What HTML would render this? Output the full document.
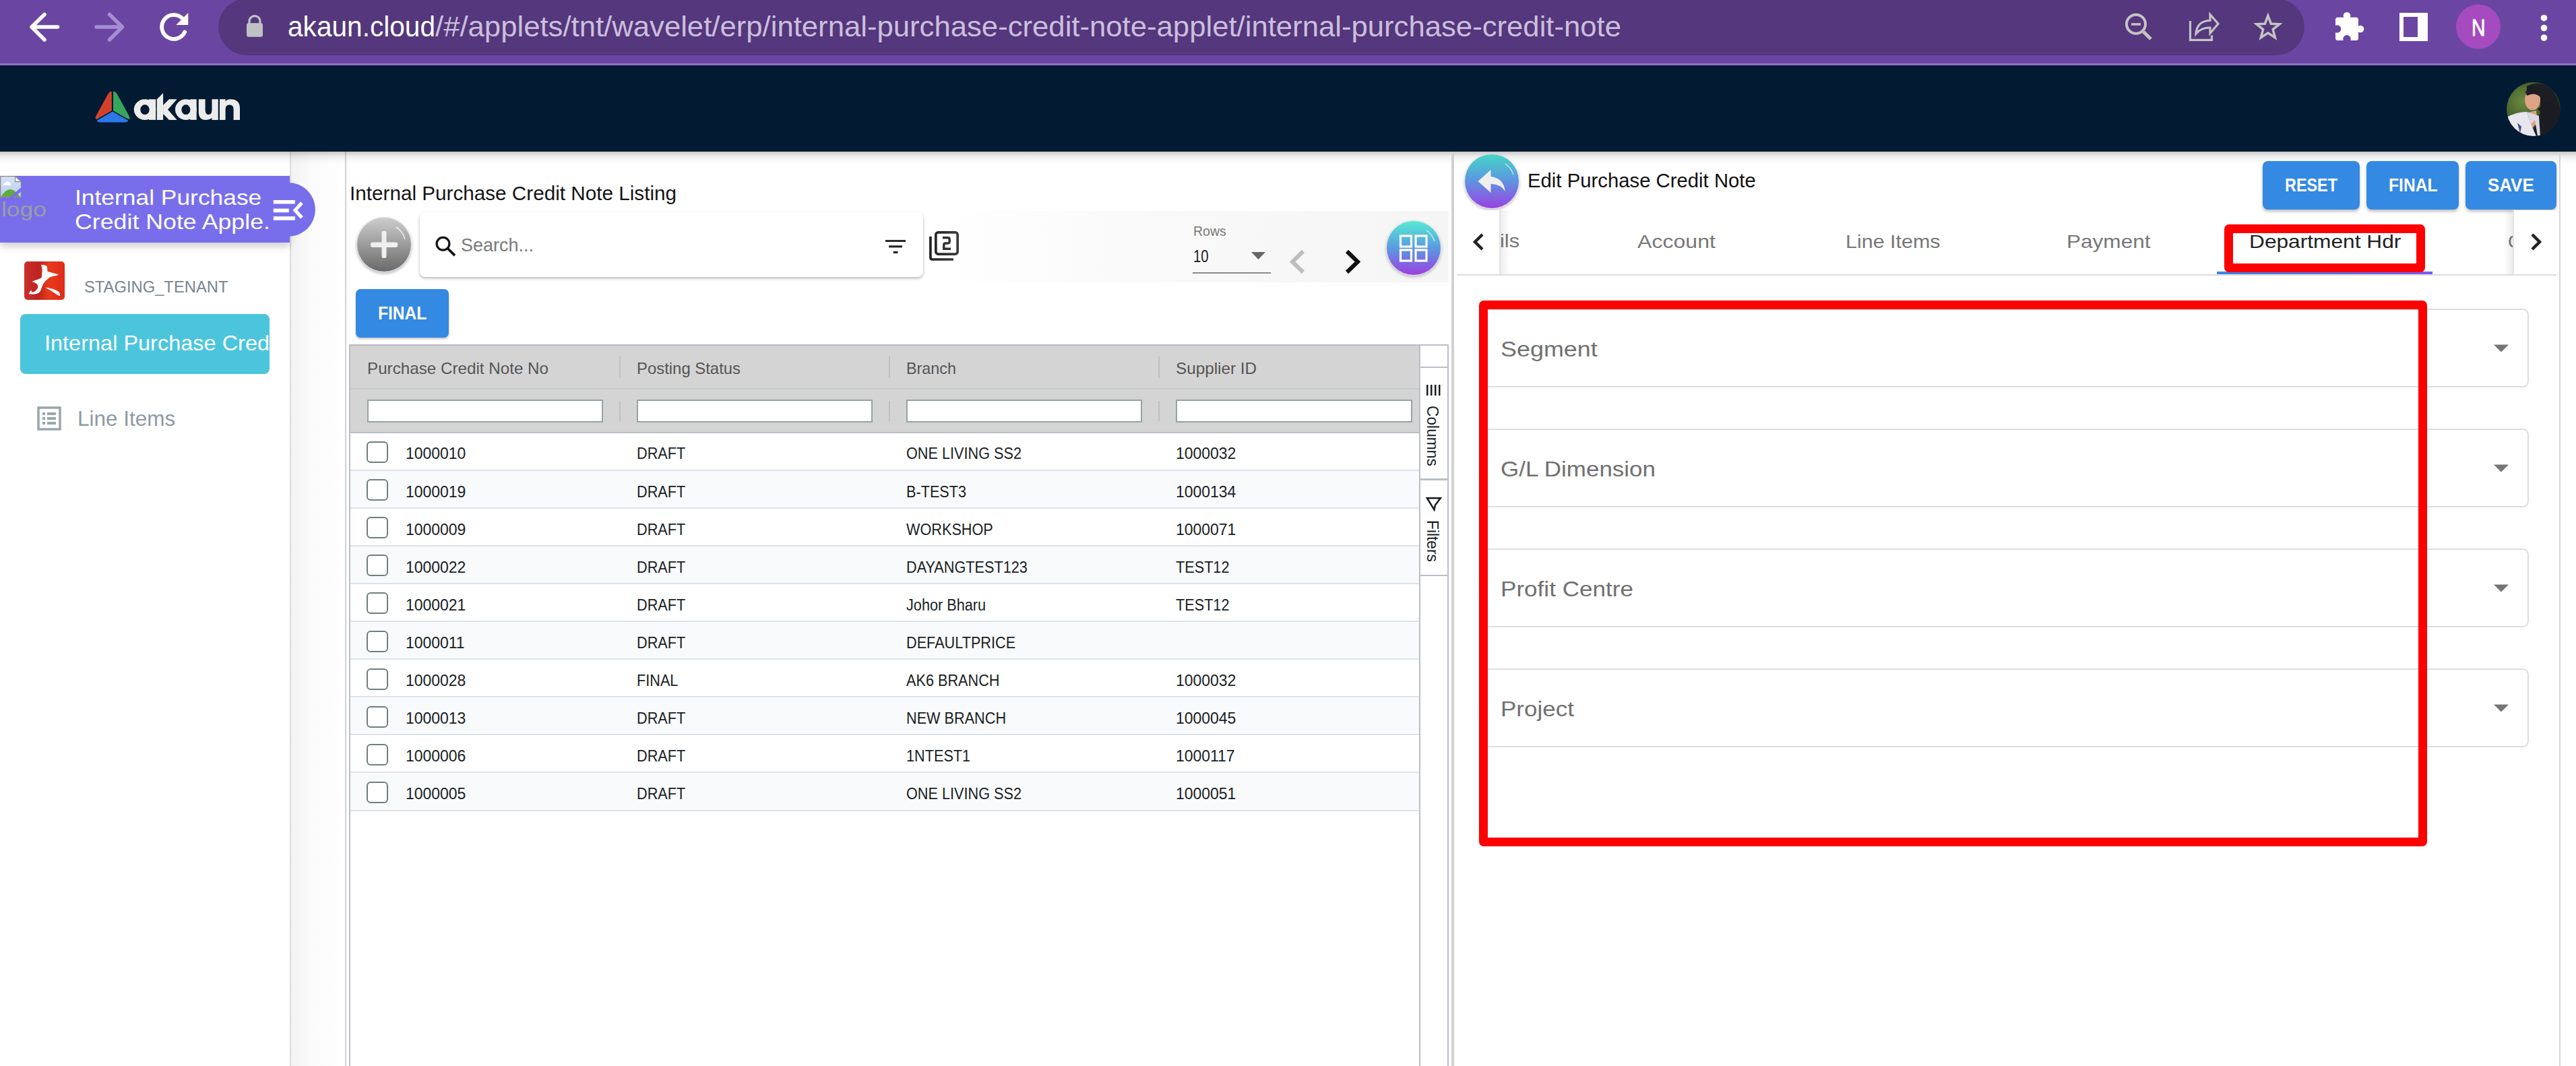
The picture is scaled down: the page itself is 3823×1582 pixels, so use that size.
<!DOCTYPE html>
<html><head><meta charset="utf-8"><style>
html,body{margin:0;padding:0;width:3823px;height:1582px;overflow:hidden;background:#fff;position:relative;font-family:"Liberation Sans", sans-serif;}
.a{position:absolute;box-sizing:border-box;}
.t{position:absolute;line-height:1;white-space:pre;}
.clip{position:absolute;overflow:hidden;}
svg{position:absolute;overflow:visible;}
</style></head><body>
<div class='a' style='left:0;top:0;width:3823px;height:94px;background:#6a46a2'></div>
<div class='a' style='left:0;top:94px;width:3823px;height:3px;background:#8d72c2'></div>
<div class='a' style='left:324px;top:-2px;width:3096px;height:84px;border-radius:42px;background:#54377c'></div>
<svg style='left:0;top:0' width='300' height='94'>
<g fill='none' stroke='#fff' stroke-width='5.5' stroke-linecap='round' stroke-linejoin='round'>
<path d='M85.5 40 H47.5 M66 21.5 L47 40 L66 59'/>
</g>
<g fill='none' stroke='#a58ed0' stroke-width='5.5' stroke-linecap='round' stroke-linejoin='round'>
<path d='M143 40 H181 M162.5 21.5 L181.5 40 L162.5 59'/>
</g>
<path d='M270.7 27.3 A17.9 17.9 0 1 0 274.2 47.6' fill='none' stroke='#fff' stroke-width='5.8' stroke-linecap='round'/>
<path d='M279.3 19.1 V37 H261.3 Z' fill='#fff'/>
</svg>
<svg style='left:0;top:0' width='420' height='94'>
<path d='M370 36 V31.6 A8 8 0 0 1 386 31.6 V36' fill='none' stroke='#bfc1c6' stroke-width='3.2'/>
<rect x='366' y='34.3' width='24' height='20.4' rx='3' fill='#bfc1c6'/>
</svg>
<div class='t' style='left:427.0px;top:18.3px;font-size:43.3px;color:#ffffff;font-weight:400;transform:scaleX(0.9378);transform-origin:0 0;'>akaun.cloud</div>
<div class='t' style='left:646.0px;top:18.3px;font-size:43.3px;color:#cbbfdd;font-weight:400;transform:scaleX(1.0087);transform-origin:0 0;'>/#/applets/tnt/wavelet/erp/internal-purchase-credit-note-applet/internal-purchase-credit-note</div>
<svg style='left:3140px;top:10px' width='300' height='70'>
<g fill='none' stroke='#c4c4c4'>
<circle cx='30' cy='25.8' r='14' stroke-width='4'/>
<path d='M23 26 H37' stroke-width='3.5'/>
<path d='M41 37 L52 48' stroke-width='5.2'/>
<path d='M110.5 21 V49.3 H142.5 V42.4' stroke-width='3.2'/>
<path d='M119 40 C120 28 127 20.5 140 20.5 V11.5 L152 25.3 L140 39.5 V31 C131 31 124 34 119 40 Z' stroke-width='3.2' stroke-linejoin='miter'/>
<path d='M225.9 13.3 L230.4 25.2 L243.0 25.7 L233.1 33.6 L236.5 45.9 L225.9 38.9 L215.3 45.9 L218.7 33.6 L208.8 25.7 L221.4 25.2 Z' stroke-width='3.5' stroke-linejoin='miter' stroke-miterlimit='10'/>
</g>
</svg>
<svg style='left:3440px;top:0' width='383' height='94'>
<g fill='#fff'>
<rect x='26' y='25.7' width='34' height='34.4' rx='3.5'/>
<circle cx='43' cy='23.2' r='5.3'/>
<circle cx='63' cy='43' r='5.3'/>
</g>
<g fill='#6a46a2'>
<circle cx='28.5' cy='43' r='5.8'/>
<circle cx='43' cy='57.8' r='5.8'/>
</g>
<rect x='121' y='19' width='42' height='42' fill='#fff'/>
<rect x='127' y='25' width='21' height='30' fill='#6a46a2'/>
<circle cx='238' cy='39.5' r='33' fill='#a54bbf'/>
<circle cx='335.5' cy='26.7' r='4.8' fill='#fff'/>
<circle cx='335.5' cy='41.5' r='4.8' fill='#fff'/>
<circle cx='335.5' cy='56' r='4.8' fill='#fff'/>
</svg>
<div class='t' style='left:3667.5px;top:23.2px;font-size:35.2px;color:#ffffff;font-weight:400;transform:scaleX(0.8064);transform-origin:0 0;-webkit-text-stroke:0.9px #fff;'>N</div>
<div class='a' style='left:0;top:97px;width:3823px;height:128px;background:#031a33'></div>
<svg style='left:0;top:0' width='400' height='225'>
<path d='M165.8 136 Q163 135 160 140 L143 171 Q140 177 143.5 177 L165.8 164.3 Z' fill='#d2412a'/>
<path d='M168 136 Q171 135 174 140 L191 171 Q194 177 190.5 177 L168 164.3 Z' fill='#37a55c'/>
<path d='M143.5 179 L166.9 165.5 L190.5 179 Q189 181.5 186 181.5 H148 Q145 181.5 143.5 179 Z' fill='#2a78ea'/>
<g fill='#ececec'>
<ellipse cx='215' cy='162.6' rx='16.2' ry='15.3'/>
<rect x='221' y='147.3' width='10.2' height='30.6'/>
<path d='M232.8 147.5 L242.1 138 V177.9 H232.8 Z'/>
<path d='M242.1 156 L251 147.3 H262.7 L249 162.6 L262.7 177.9 H251 L242.1 169 Z'/>
<ellipse cx='275.9' cy='162.6' rx='15.9' ry='15.3'/>
<rect x='282.3' y='147.3' width='9.4' height='30.6'/>
<path d='M294.8 147.3 H304.6 V163 Q304.6 170.1 309.5 170.1 Q314.5 170.1 314.5 163 V147.3 H323.8 V177.9 H314.5 V175 Q311 177.9 305 177.9 Q294.8 177.9 294.8 166 Z'/>
<path d='M326 177.9 H334.6 V162 Q334.6 155.4 340.6 155.4 Q346.6 155.4 346.6 162 V177.9 H356 V161 Q356 147.3 342 147.3 Q337 147.3 334.6 150.5 V147.3 H326 Z'/>
</g>
<g fill='#031a33'>
<ellipse cx='215' cy='162.7' rx='6.7' ry='7.4'/>
<ellipse cx='275.9' cy='162.7' rx='6.5' ry='7.4'/>
</g>
</svg>
<svg style='left:3720px;top:122px' width='80' height='80'>
<defs><clipPath id='avc'><circle cx='40' cy='40' r='40'/></clipPath>
<radialGradient id='avg' cx='0.3' cy='0.35' r='0.7'><stop offset='0' stop-color='#6b8a3e'/><stop offset='0.6' stop-color='#3f5a2a'/><stop offset='1' stop-color='#2a3d20'/></radialGradient></defs>
<g clip-path='url(#avc)'>
<rect width='80' height='80' fill='url(#avg)'/>
<path d='M30 6 Q45 -2 62 6 Q78 20 80 45 L80 80 L36 80 Q44 60 50 45 Q52 30 46 18 Q38 14 30 20 Z' fill='#1d1d24'/>
<ellipse cx='38.5' cy='26' rx='11.5' ry='15.5' fill='#dca384'/>
<path d='M28 14 Q36 6 48 10 Q52 16 50 22 Q42 14 30 20 Z' fill='#1d1d24'/>
<path d='M32 45 L44 42 L46 60 L36 70 Z' fill='#d9a385'/>
<path d='M0 52 Q15 44 30 44 L36 62 L44 80 L0 80 Z' fill='#e9e6ef'/>
<path d='M30 44 L36 62 L42 56 L46 80 L50 80 L48 50 Z' fill='#dcd8e6'/>
<path d='M46 40 Q60 50 56 80 L80 80 L80 40 Q70 30 60 28 Z' fill='#1b1b22'/>
<path d='M16 60 L22 66 L20 76 Z' fill='#3c4f8a'/>
</g>
</svg>
<div class='a' style='left:430px;top:225px;width:2px;height:1357px;background:#dcdcdc'></div>
<div class='a' style='left:432px;top:225px;width:81px;height:1357px;background:linear-gradient(to right,#f3f3f3,#fbfbfb 40%,#ffffff)'></div>
<div class='a' style='left:512px;top:225px;width:2px;height:1357px;background:#d2d2d2'></div>
<div class='a' style='left:0;top:225px;width:3823px;height:20px;background:linear-gradient(rgba(0,0,0,0.22),rgba(0,0,0,0.07) 35%,rgba(0,0,0,0.02) 70%,rgba(0,0,0,0))'></div>
<div class='a' style='left:0;top:261px;width:430px;height:99px;background:#786eec;box-shadow:0 6px 10px rgba(0,0,0,0.18)'></div>
<div class='a' style='left:388px;top:271px;width:80px;height:80px;border-radius:50%;background:#786eec'></div>
<svg style='left:0;top:261px' width='34' height='34'>
<defs><linearGradient id='big' x1='0' y1='0' x2='0' y2='1'><stop offset='0' stop-color='#d6e2f7'/><stop offset='1' stop-color='#bccfee'/></linearGradient></defs>
<path d='M0 0.6 H22.6 L31.4 8.6 V31.4 H0 Z' fill='url(#big)'/>
<path d='M1 31.4 Q8 20 15.4 20 Q22 20 30 31.4 Z' fill='#62ab3a'/>
<path d='M4 13.8 Q5 10.5 8.5 10 Q10 7.5 13 8.5 Q15.5 9.5 15.5 12 Q16.5 13 15.5 14 H4 Z' fill='#fff'/>
<path d='M22.6 0.6 V8.6 H31.4 Z' fill='#fff'/>
<path d='M13.9 32.5 L33 15.5 V22 L20.5 32.5 Z' fill='#786eec'/>
<g fill='none' stroke='#8c8c8c' stroke-width='1.3'>
<path d='M13.9 31.4 H0.6 V0.6 H22.6 L31.4 8.6 V15.8'/>
<path d='M22.6 0.6 V8.6 H31.4'/>
<path d='M31.4 22.5 V31.4 H20.5'/>
</g>
</svg>
<div class='t' style='left:2.2px;top:296.4px;font-size:30px;color:#999ea3;font-weight:400;transform:scaleX(1.1813);transform-origin:0 0;'>logo</div>
<div class='t' style='left:111.2px;top:276.9px;font-size:32px;color:#ffffff;font-weight:400;transform:scaleX(1.1056);transform-origin:0 0;'>Internal Purchase</div>
<div class='clip' style='left:111px;top:305px;width:289px;height:45px'>
<div class='t' style='left:0.2px;top:7.7px;font-size:32px;color:#ffffff;font-weight:400;transform:scaleX(1.1165);transform-origin:0 0;'>Credit Note Apple...</div>
</div>
<svg style='left:400px;top:290px' width='60' height='45'>
<g fill='#fff'><rect x='5.8' y='7' width='32' height='5.5'/><rect x='5.8' y='19.6' width='23' height='5.6'/><rect x='5.8' y='31.2' width='32' height='5.6'/></g>
<path d='M48 11 L38 22 L48 33' fill='none' stroke='#fff' stroke-width='5'/>
</svg>
<div class='a' style='left:36px;top:388px;width:60px;height:57px;border-radius:5px;background:linear-gradient(to right,#c9322b,#bf2220 35%,#e63b1c 60%,#e12a17)'></div>
<svg style='left:36px;top:388px' width='60' height='57'>
<path fill='#fff' d='M25 5.2 Q30 4.5 33.8 7.3 Q34 11 34.7 15 L50.7 19.2 Q50 20.5 48 21 Q42 22 38 23.4 Q34 26 31.3 29.3 Q28.5 32.5 27 36 Q25.5 40 24.5 42.8 Q23 46 21.2 47 Q17 48.7 12.7 48.7 L6.8 48.3 Q7.5 46 8.5 44.5 L10.6 42.4 Q10.8 44 11 45.8 Q14 45.5 16 44.5 Q18.5 42 19.9 39.4 Q20.5 37.5 20.3 36 Q19.5 34 17.8 32.7 Q14.5 31 11.4 30.1 Q14 28.8 17.8 27.6 L25.4 24.6 Q26.2 22 26.2 19.2 Q26.6 14 26.6 10.7 Q26 8 25 5.2 Z'/>
<path fill='#fff' d='M30.9 38.6 Q37 39.5 43.1 41.1 Q48 43 51.6 45.3 Q53 47.5 53.3 50.4 Q52 51 50.7 50.8 Q46 47.5 41.4 44.5 Q36 41.5 30.9 38.6 Z'/>
</svg>
<div class='t' style='left:124.6px;top:414.3px;font-size:24px;color:#77858f;font-weight:400;transform:scaleX(0.9899);transform-origin:0 0;'>STAGING_TENANT</div>
<div class='a' style='left:30px;top:466px;width:370px;height:89px;border-radius:8px;background:#4bc5dc'></div>
<div class='clip' style='left:66px;top:480px;width:334px;height:60px'>
<div class='t' style='left:0.0px;top:14.3px;font-size:31.5px;color:#ffffff;font-weight:400;transform:scaleX(1.0313);transform-origin:0 0;'>Internal Purchase Credit Note</div>
</div>
<svg style='left:54px;top:602px' width='40' height='40'>
<rect x='3' y='3' width='32' height='32' fill='none' stroke='#9aa6ae' stroke-width='3.5'/>
<g fill='#9aa6ae'><rect x='9' y='10' width='4' height='4'/><rect x='16' y='10' width='13' height='4'/>
<rect x='9' y='17' width='4' height='4'/><rect x='16' y='17' width='13' height='4'/>
<rect x='9' y='24' width='4' height='4'/><rect x='16' y='24' width='13' height='4'/></g>
</svg>
<div class='t' style='left:114.7px;top:604.9px;font-size:32px;color:#8e9aa2;font-weight:400;transform:scaleX(0.9843);transform-origin:0 0;'>Line Items</div>
<div class='t' style='left:518.6px;top:271.6px;font-size:30px;color:#141414;font-weight:400;transform:scaleX(0.9893);transform-origin:0 0;'>Internal Purchase Credit Note Listing</div>
<div class='a' style='left:529px;top:322px;width:82px;height:82px;border-radius:50%;background:linear-gradient(#cdcdcd,#6a6a6a);border:1.5px solid #e8def2;box-shadow:0 2px 4px rgba(0,0,0,0.3)'></div>
<svg style='left:529px;top:322px' width='82' height='82'>
<rect x='21' y='37.5' width='40.2' height='7.6' rx='3' fill='#efefef'/><rect x='37.5' y='20.8' width='7' height='40.2' rx='3' fill='#efefef'/>
<path d='M59 15 A31 31 0 0 1 72 33' fill='none' stroke='rgba(255,255,255,0.75)' stroke-width='1.5'/>
</svg>
<div class='a' style='left:623px;top:315px;width:747px;height:96px;border-radius:8px;background:#fff;box-shadow:0 2px 4px rgba(0,0,0,0.3)'></div>
<svg style='left:640px;top:345px' width='45' height='40'>
<circle cx='17.5' cy='16.8' r='9.4' fill='none' stroke='#111' stroke-width='3.2'/>
<path d='M24.2 23.5 L35 34.2' stroke='#111' stroke-width='3.8'/>
</svg>
<div class='t' style='left:683.7px;top:349.8px;font-size:28px;color:#7a7a7a;font-weight:400;transform:scaleX(0.9637);transform-origin:0 0;'>Search...</div>
<svg style='left:1310px;top:350px' width='40' height='30'>
<g fill='#222'><rect x='4' y='6.1' width='30' height='2.9'/><rect x='9.1' y='14.3' width='19.8' height='3.1'/><rect x='15.8' y='22.8' width='6.6' height='3.2'/></g>
</svg>
<svg style='left:1375px;top:340px' width='52' height='52'>
<path d='M5.9 11 V42 Q5.9 45 9 45 H40' fill='none' stroke='#222' stroke-width='3.7'/>
<rect x='13.85' y='4.85' width='32.3' height='32.2' rx='3.5' fill='none' stroke='#222' stroke-width='3.7'/>
<path d='M24 12.8 H31.5 Q34.2 12.8 34.2 15.5 V18.3 Q34.2 21 31.5 21 H28.5 Q25.8 21 25.8 23.7 V29.2 H36' fill='none' stroke='#222' stroke-width='3.5'/>
</svg>
<div class='a' style='left:1380px;top:313px;width:770px;height:106px;background:linear-gradient(to right,rgba(246,246,246,0),#f9f9f9 45%,#f5f5f5)'></div>
<div class='t' style='left:1770.7px;top:333.1px;font-size:20px;color:#777777;font-weight:400;transform:scaleX(0.9737);transform-origin:0 0;'>Rows</div>
<div class='t' style='left:1770.7px;top:367.0px;font-size:26px;color:#222222;font-weight:400;transform:scaleX(0.7849);transform-origin:0 0;'>10</div>
<div class='a' style='left:1770px;top:404px;width:116px;height:2px;background:#8a8a8a'></div>
<svg style='left:1855px;top:372px' width='26' height='16'><path d='M2 2 H23 L12.5 13 Z' fill='#666'/></svg>
<svg style='left:1905px;top:365px' width='130' height='48'>
<path d='M29 8 L13 23.5 L29 39' fill='none' stroke='#bdbdbd' stroke-width='6'/>
<path d='M94 8 L110 23.5 L94 39' fill='none' stroke='#111' stroke-width='6'/>
</svg>
<div class='a' style='left:2057px;top:327px;width:82px;height:82px;border-radius:50%;background:linear-gradient(#55ecd2,#5a9ae0 50%,#9d3fe2);border:1.5px solid #e8def2;box-shadow:0 2px 4px rgba(0,0,0,0.25)'></div>
<svg style='left:2057px;top:327px' width='82' height='82'>
<g fill='none' stroke='#fff' stroke-width='3.2'><rect x='21.5' y='23' width='16' height='16'/><rect x='44' y='23' width='16' height='16'/><rect x='21.5' y='44' width='16' height='16'/><rect x='44' y='44' width='16' height='16'/></g>
<path d='M60 15 A31 31 0 0 1 72 31' fill='none' stroke='rgba(255,255,255,0.7)' stroke-width='1.5'/>
</svg>
<div class='a' style='left:528px;top:429px;width:138px;height:72px;border-radius:7px;background:#3489e2;box-shadow:0 2px 3px rgba(0,0,0,0.25)'></div>
<div class='t' style='left:560.7px;top:450.9px;font-size:28px;color:#ffffff;font-weight:700;transform:scaleX(0.8770);transform-origin:0 0;'>FINAL</div>
<div class='a' style='left:518px;top:511px;width:1590px;height:1071px;border:2px solid #babfc7;border-bottom:none;background:#fff'></div>
<div class='a' style='left:520px;top:513px;width:1587px;height:129px;background:#d4d4d4'></div>
<div class='a' style='left:520px;top:576px;width:1587px;height:2px;background:#c6c9cc'></div>
<div class='a' style='left:520px;top:641px;width:1587px;height:2px;background:#babfc7'></div>
<div class='a' style='left:919px;top:529px;width:2px;height:32px;background:#c0c0c0'></div>
<div class='a' style='left:919px;top:595px;width:2px;height:30px;background:#c0c0c0'></div>
<div class='a' style='left:1319px;top:529px;width:2px;height:32px;background:#c0c0c0'></div>
<div class='a' style='left:1319px;top:595px;width:2px;height:30px;background:#c0c0c0'></div>
<div class='a' style='left:1719px;top:529px;width:2px;height:32px;background:#c0c0c0'></div>
<div class='a' style='left:1719px;top:595px;width:2px;height:30px;background:#c0c0c0'></div>
<div class='t' style='left:544.6px;top:534.7px;font-size:24px;color:#555555;font-weight:400;transform:scaleX(1.0083);transform-origin:0 0;'>Purchase Credit Note No</div>
<div class='t' style='left:944.5px;top:534.7px;font-size:24px;color:#555555;font-weight:400;transform:scaleX(0.9951);transform-origin:0 0;'>Posting Status</div>
<div class='t' style='left:1344.6px;top:534.7px;font-size:24px;color:#555555;font-weight:400;transform:scaleX(0.9731);transform-origin:0 0;'>Branch</div>
<div class='t' style='left:1744.7px;top:534.7px;font-size:24px;color:#555555;font-weight:400;transform:scaleX(1.0107);transform-origin:0 0;'>Supplier ID</div>
<div class='a' style='left:544.6px;top:592.7px;width:350.8px;height:34.6px;background:#fff;border:2px solid #95a3a4'></div>
<div class='a' style='left:944.5px;top:592.7px;width:350.5px;height:34.6px;background:#fff;border:2px solid #95a3a4'></div>
<div class='a' style='left:1344.6px;top:592.7px;width:350.9px;height:34.6px;background:#fff;border:2px solid #95a3a4'></div>
<div class='a' style='left:1744.7px;top:592.7px;width:350.9px;height:34.6px;background:#fff;border:2px solid #95a3a4'></div>
<div class='a' style='left:520px;top:643.0px;width:1587px;height:54.1px;background:#ffffff'></div>
<div class='a' style='left:520px;top:696.6px;width:1587px;height:2px;background:#dde2eb'></div>
<div class='a' style='left:544px;top:655.0px;width:32px;height:32px;border:2.5px solid #6f7e7e;border-radius:6px;background:#fff'></div>
<div class='t' style='left:601.8px;top:662.4px;font-size:23.3px;color:#181d1f;font-weight:400;transform:scaleX(0.985);transform-origin:0 0;'>1000010</div>
<div class='t' style='left:945.0px;top:662.4px;font-size:23.3px;color:#181d1f;font-weight:400;transform:scaleX(0.93);transform-origin:0 0;'>DRAFT</div>
<div class='t' style='left:1344.6px;top:662.4px;font-size:23.3px;color:#181d1f;font-weight:400;transform:scaleX(0.93);transform-origin:0 0;'>ONE LIVING SS2</div>
<div class='t' style='left:1745.0px;top:662.4px;font-size:23.3px;color:#181d1f;font-weight:400;transform:scaleX(0.985);transform-origin:0 0;'>1000032</div>
<div class='a' style='left:520px;top:699.1px;width:1587px;height:54.1px;background:#f9fafc'></div>
<div class='a' style='left:520px;top:752.7px;width:1587px;height:2px;background:#dde2eb'></div>
<div class='a' style='left:544px;top:711.1px;width:32px;height:32px;border:2.5px solid #6f7e7e;border-radius:6px;background:#fff'></div>
<div class='t' style='left:601.8px;top:718.5px;font-size:23.3px;color:#181d1f;font-weight:400;transform:scaleX(0.985);transform-origin:0 0;'>1000019</div>
<div class='t' style='left:945.0px;top:718.5px;font-size:23.3px;color:#181d1f;font-weight:400;transform:scaleX(0.93);transform-origin:0 0;'>DRAFT</div>
<div class='t' style='left:1344.6px;top:718.5px;font-size:23.3px;color:#181d1f;font-weight:400;transform:scaleX(0.93);transform-origin:0 0;'>B-TEST3</div>
<div class='t' style='left:1745.0px;top:718.5px;font-size:23.3px;color:#181d1f;font-weight:400;transform:scaleX(0.985);transform-origin:0 0;'>1000134</div>
<div class='a' style='left:520px;top:755.2px;width:1587px;height:54.1px;background:#ffffff'></div>
<div class='a' style='left:520px;top:808.8px;width:1587px;height:2px;background:#dde2eb'></div>
<div class='a' style='left:544px;top:767.2px;width:32px;height:32px;border:2.5px solid #6f7e7e;border-radius:6px;background:#fff'></div>
<div class='t' style='left:601.8px;top:774.6px;font-size:23.3px;color:#181d1f;font-weight:400;transform:scaleX(0.985);transform-origin:0 0;'>1000009</div>
<div class='t' style='left:945.0px;top:774.6px;font-size:23.3px;color:#181d1f;font-weight:400;transform:scaleX(0.93);transform-origin:0 0;'>DRAFT</div>
<div class='t' style='left:1344.6px;top:774.6px;font-size:23.3px;color:#181d1f;font-weight:400;transform:scaleX(0.93);transform-origin:0 0;'>WORKSHOP</div>
<div class='t' style='left:1745.0px;top:774.6px;font-size:23.3px;color:#181d1f;font-weight:400;transform:scaleX(0.985);transform-origin:0 0;'>1000071</div>
<div class='a' style='left:520px;top:811.3px;width:1587px;height:54.1px;background:#f9fafc'></div>
<div class='a' style='left:520px;top:864.9px;width:1587px;height:2px;background:#dde2eb'></div>
<div class='a' style='left:544px;top:823.3px;width:32px;height:32px;border:2.5px solid #6f7e7e;border-radius:6px;background:#fff'></div>
<div class='t' style='left:601.8px;top:830.7px;font-size:23.3px;color:#181d1f;font-weight:400;transform:scaleX(0.985);transform-origin:0 0;'>1000022</div>
<div class='t' style='left:945.0px;top:830.7px;font-size:23.3px;color:#181d1f;font-weight:400;transform:scaleX(0.93);transform-origin:0 0;'>DRAFT</div>
<div class='t' style='left:1344.6px;top:830.7px;font-size:23.3px;color:#181d1f;font-weight:400;transform:scaleX(0.93);transform-origin:0 0;'>DAYANGTEST123</div>
<div class='t' style='left:1745.0px;top:830.7px;font-size:23.3px;color:#181d1f;font-weight:400;transform:scaleX(0.93);transform-origin:0 0;'>TEST12</div>
<div class='a' style='left:520px;top:867.4px;width:1587px;height:54.1px;background:#ffffff'></div>
<div class='a' style='left:520px;top:921.0px;width:1587px;height:2px;background:#dde2eb'></div>
<div class='a' style='left:544px;top:879.4px;width:32px;height:32px;border:2.5px solid #6f7e7e;border-radius:6px;background:#fff'></div>
<div class='t' style='left:601.8px;top:886.8px;font-size:23.3px;color:#181d1f;font-weight:400;transform:scaleX(0.985);transform-origin:0 0;'>1000021</div>
<div class='t' style='left:945.0px;top:886.8px;font-size:23.3px;color:#181d1f;font-weight:400;transform:scaleX(0.93);transform-origin:0 0;'>DRAFT</div>
<div class='t' style='left:1344.6px;top:886.8px;font-size:23.3px;color:#181d1f;font-weight:400;transform:scaleX(0.93);transform-origin:0 0;'>Johor Bharu</div>
<div class='t' style='left:1745.0px;top:886.8px;font-size:23.3px;color:#181d1f;font-weight:400;transform:scaleX(0.93);transform-origin:0 0;'>TEST12</div>
<div class='a' style='left:520px;top:923.5px;width:1587px;height:54.1px;background:#f9fafc'></div>
<div class='a' style='left:520px;top:977.1px;width:1587px;height:2px;background:#dde2eb'></div>
<div class='a' style='left:544px;top:935.5px;width:32px;height:32px;border:2.5px solid #6f7e7e;border-radius:6px;background:#fff'></div>
<div class='t' style='left:601.8px;top:942.9px;font-size:23.3px;color:#181d1f;font-weight:400;transform:scaleX(0.985);transform-origin:0 0;'>1000011</div>
<div class='t' style='left:945.0px;top:942.9px;font-size:23.3px;color:#181d1f;font-weight:400;transform:scaleX(0.93);transform-origin:0 0;'>DRAFT</div>
<div class='t' style='left:1344.6px;top:942.9px;font-size:23.3px;color:#181d1f;font-weight:400;transform:scaleX(0.93);transform-origin:0 0;'>DEFAULTPRICE</div>
<div class='a' style='left:520px;top:979.6px;width:1587px;height:54.1px;background:#ffffff'></div>
<div class='a' style='left:520px;top:1033.2px;width:1587px;height:2px;background:#dde2eb'></div>
<div class='a' style='left:544px;top:991.6px;width:32px;height:32px;border:2.5px solid #6f7e7e;border-radius:6px;background:#fff'></div>
<div class='t' style='left:601.8px;top:999.0px;font-size:23.3px;color:#181d1f;font-weight:400;transform:scaleX(0.985);transform-origin:0 0;'>1000028</div>
<div class='t' style='left:945.0px;top:999.0px;font-size:23.3px;color:#181d1f;font-weight:400;transform:scaleX(0.93);transform-origin:0 0;'>FINAL</div>
<div class='t' style='left:1344.6px;top:999.0px;font-size:23.3px;color:#181d1f;font-weight:400;transform:scaleX(0.93);transform-origin:0 0;'>AK6 BRANCH</div>
<div class='t' style='left:1745.0px;top:999.0px;font-size:23.3px;color:#181d1f;font-weight:400;transform:scaleX(0.985);transform-origin:0 0;'>1000032</div>
<div class='a' style='left:520px;top:1035.7px;width:1587px;height:54.1px;background:#f9fafc'></div>
<div class='a' style='left:520px;top:1089.3px;width:1587px;height:2px;background:#dde2eb'></div>
<div class='a' style='left:544px;top:1047.7px;width:32px;height:32px;border:2.5px solid #6f7e7e;border-radius:6px;background:#fff'></div>
<div class='t' style='left:601.8px;top:1055.1px;font-size:23.3px;color:#181d1f;font-weight:400;transform:scaleX(0.985);transform-origin:0 0;'>1000013</div>
<div class='t' style='left:945.0px;top:1055.1px;font-size:23.3px;color:#181d1f;font-weight:400;transform:scaleX(0.93);transform-origin:0 0;'>DRAFT</div>
<div class='t' style='left:1344.6px;top:1055.1px;font-size:23.3px;color:#181d1f;font-weight:400;transform:scaleX(0.93);transform-origin:0 0;'>NEW BRANCH</div>
<div class='t' style='left:1745.0px;top:1055.1px;font-size:23.3px;color:#181d1f;font-weight:400;transform:scaleX(0.985);transform-origin:0 0;'>1000045</div>
<div class='a' style='left:520px;top:1091.8px;width:1587px;height:54.1px;background:#ffffff'></div>
<div class='a' style='left:520px;top:1145.4px;width:1587px;height:2px;background:#dde2eb'></div>
<div class='a' style='left:544px;top:1103.8px;width:32px;height:32px;border:2.5px solid #6f7e7e;border-radius:6px;background:#fff'></div>
<div class='t' style='left:601.8px;top:1111.2px;font-size:23.3px;color:#181d1f;font-weight:400;transform:scaleX(0.985);transform-origin:0 0;'>1000006</div>
<div class='t' style='left:945.0px;top:1111.2px;font-size:23.3px;color:#181d1f;font-weight:400;transform:scaleX(0.93);transform-origin:0 0;'>DRAFT</div>
<div class='t' style='left:1344.6px;top:1111.2px;font-size:23.3px;color:#181d1f;font-weight:400;transform:scaleX(0.93);transform-origin:0 0;'>1NTEST1</div>
<div class='t' style='left:1745.0px;top:1111.2px;font-size:23.3px;color:#181d1f;font-weight:400;transform:scaleX(0.985);transform-origin:0 0;'>1000117</div>
<div class='a' style='left:520px;top:1147.9px;width:1587px;height:54.1px;background:#f9fafc'></div>
<div class='a' style='left:520px;top:1201.5px;width:1587px;height:2px;background:#dde2eb'></div>
<div class='a' style='left:544px;top:1159.9px;width:32px;height:32px;border:2.5px solid #6f7e7e;border-radius:6px;background:#fff'></div>
<div class='t' style='left:601.8px;top:1167.3px;font-size:23.3px;color:#181d1f;font-weight:400;transform:scaleX(0.985);transform-origin:0 0;'>1000005</div>
<div class='t' style='left:945.0px;top:1167.3px;font-size:23.3px;color:#181d1f;font-weight:400;transform:scaleX(0.93);transform-origin:0 0;'>DRAFT</div>
<div class='t' style='left:1344.6px;top:1167.3px;font-size:23.3px;color:#181d1f;font-weight:400;transform:scaleX(0.93);transform-origin:0 0;'>ONE LIVING SS2</div>
<div class='t' style='left:1745.0px;top:1167.3px;font-size:23.3px;color:#181d1f;font-weight:400;transform:scaleX(0.985);transform-origin:0 0;'>1000051</div>
<div class='a' style='left:2106px;top:511px;width:44px;height:1071px;border:2px solid #babfc7;border-bottom:none;background:#fff'></div>
<div class='a' style='left:2108px;top:544px;width:40px;height:2px;background:#babfc7'></div>
<div class='a' style='left:2108px;top:710px;width:40px;height:3px;background:#babfc7'></div>
<div class='a' style='left:2108px;top:853px;width:40px;height:2px;background:#babfc7'></div>
<svg style='left:2112px;top:566px' width='34' height='26'><g fill='#181d1f'><rect x='5' y='5' width='2.5' height='16'/><rect x='11' y='5' width='2.5' height='16'/><rect x='17' y='5' width='2.5' height='16'/><rect x='23' y='5' width='2.5' height='16'/></g></svg>
<svg style='left:2112px;top:734px' width='34' height='30'><path d='M5.9 5.2 H25.8 L18 15.5 L16.5 22.5 Z' fill='none' stroke='#181d1f' stroke-width='2.5' stroke-linejoin='miter'/></svg>
<div class='t' style='left:2137px;top:602px;font-size:23px;color:#181d1f;transform:rotate(90deg) scaleX(0.99);transform-origin:0 0'>Columns</div>
<div class='t' style='left:2137px;top:772px;font-size:23px;color:#181d1f;transform:rotate(90deg) scaleX(0.99);transform-origin:0 0'>Filters</div>
<div class='a' style='left:2154px;top:225px;width:4px;height:1357px;background:#d0d0d0'></div>
<div class='a' style='left:2173px;top:228px;width:82px;height:82px;border-radius:50%;background:linear-gradient(#45d6c4,#5a9be0 45%,#9b41e2);border:1.5px solid #e8def2;box-shadow:0 2px 4px rgba(0,0,0,0.25)'></div>
<svg style='left:2173px;top:228px' width='82' height='82'>
<path d='M20.5 41 L39.5 24 V34 Q58 36 61 56 Q54 45 39.5 45 V58 Z' fill='#efefef'/>
<path d='M61 15 A31 31 0 0 1 73 31' fill='none' stroke='rgba(255,255,255,0.7)' stroke-width='1.5'/>
</svg>
<div class='t' style='left:2267.0px;top:253.4px;font-size:29.5px;color:#111111;font-weight:400;transform:scaleX(0.9934);transform-origin:0 0;'>Edit Purchase Credit Note</div>
<div class='a' style='left:3358px;top:239px;width:144px;height:71.5px;border-radius:8px;background:#3489e2;box-shadow:0 3px 4px rgba(0,0,0,0.25)'></div>
<div class='t' style='left:3390.5px;top:261.0px;font-size:28px;color:#ffffff;font-weight:700;transform:scaleX(0.8355);transform-origin:0 0;'>RESET</div>
<div class='a' style='left:3512px;top:239px;width:137px;height:71.5px;border-radius:8px;background:#3489e2;box-shadow:0 3px 4px rgba(0,0,0,0.25)'></div>
<div class='t' style='left:3544.6px;top:261.0px;font-size:28px;color:#ffffff;font-weight:700;transform:scaleX(0.8819);transform-origin:0 0;'>FINAL</div>
<div class='a' style='left:3659px;top:239px;width:135px;height:71.5px;border-radius:8px;background:#3489e2;box-shadow:0 3px 4px rgba(0,0,0,0.25)'></div>
<div class='t' style='left:3692.0px;top:261.0px;font-size:28px;color:#ffffff;font-weight:700;transform:scaleX(0.9262);transform-origin:0 0;'>SAVE</div>
<div class='a' style='left:2162px;top:407px;width:1632px;height:2px;background:#dddddd'></div>
<div class='t' style='left:2226.0px;top:343.6px;font-size:28px;color:#777777;font-weight:400;transform:scaleX(1.0963);transform-origin:0 0;'>ils</div>
<div class='t' style='left:2429.8px;top:344.9px;font-size:28px;color:#777777;font-weight:400;transform:scaleX(1.1456);transform-origin:0 0;'>Account</div>
<div class='t' style='left:2739.0px;top:344.9px;font-size:28px;color:#777777;font-weight:400;transform:scaleX(1.0885);transform-origin:0 0;'>Line Items</div>
<div class='t' style='left:3066.5px;top:344.9px;font-size:28px;color:#777777;font-weight:400;transform:scaleX(1.1267);transform-origin:0 0;'>Payment</div>
<div class='t' style='left:3337.6px;top:344.9px;font-size:28px;color:#222222;font-weight:400;transform:scaleX(1.1316);transform-origin:0 0;'>Department Hdr</div>
<div class='t' style='left:3722.0px;top:344.9px;font-size:28px;color:#777777;font-weight:400;transform:scaleX(0.9884);transform-origin:0 0;'>C</div>
<div class='a' style='left:3290px;top:403px;width:320px;height:4px;background:linear-gradient(to right,#3a86e0,#7b5cf0)'></div>
<div class='a' style='left:2158px;top:312px;width:68px;height:95px;background:#fff'></div>
<div class='a' style='left:2225px;top:312px;width:1.5px;height:95px;background:#e2e2e2'></div>
<div class='a' style='left:2226.5px;top:312px;width:14px;height:95px;background:linear-gradient(to right,rgba(0,0,0,0.07),rgba(0,0,0,0))'></div>
<div class='a' style='left:3729.5px;top:312px;width:64px;height:95px;background:#fff'></div>
<div class='a' style='left:3729px;top:312px;width:1.5px;height:95px;background:#e2e2e2'></div>
<div class='a' style='left:3715px;top:312px;width:14px;height:95px;background:linear-gradient(to left,rgba(0,0,0,0.07),rgba(0,0,0,0))'></div>
<svg style='left:2180px;top:342px' width='30' height='34'><path d='M20 6 L9 17 L20 28' fill='none' stroke='#222' stroke-width='4.5'/></svg>
<svg style='left:3748px;top:342px' width='30' height='34'><path d='M10 6 L21 17 L10 28' fill='none' stroke='#222' stroke-width='4.5'/></svg>
<div class='a' style='left:3798px;top:225px;width:2px;height:1357px;background:#d6d6d6'></div>
<div class='a' style='left:2200px;top:457.5px;width:1553px;height:117.5px;border:2px solid #dedede;border-radius:9px;background:#fff'></div>
<div class='t' style='left:2226.5px;top:502.6px;font-size:31px;color:#707070;font-weight:400;transform:scaleX(1.1581);transform-origin:0 0;'>Segment</div>
<svg style='left:3698px;top:508.5px' width='28' height='16'><path d='M3 2.5 H25 L14 13.5 Z' fill='#757575'/></svg>
<div class='a' style='left:2200px;top:635.5px;width:1553px;height:117.5px;border:2px solid #dedede;border-radius:9px;background:#fff'></div>
<div class='t' style='left:2226.5px;top:680.6px;font-size:31px;color:#707070;font-weight:400;transform:scaleX(1.1281);transform-origin:0 0;'>G/L Dimension</div>
<svg style='left:3698px;top:686.5px' width='28' height='16'><path d='M3 2.5 H25 L14 13.5 Z' fill='#757575'/></svg>
<div class='a' style='left:2200px;top:813.5px;width:1553px;height:117.5px;border:2px solid #dedede;border-radius:9px;background:#fff'></div>
<div class='t' style='left:2226.5px;top:858.6px;font-size:31px;color:#707070;font-weight:400;transform:scaleX(1.1321);transform-origin:0 0;'>Profit Centre</div>
<svg style='left:3698px;top:864.5px' width='28' height='16'><path d='M3 2.5 H25 L14 13.5 Z' fill='#757575'/></svg>
<div class='a' style='left:2200px;top:991.5px;width:1553px;height:117.5px;border:2px solid #dedede;border-radius:9px;background:#fff'></div>
<div class='t' style='left:2226.5px;top:1036.6px;font-size:31px;color:#707070;font-weight:400;transform:scaleX(1.1297);transform-origin:0 0;'>Project</div>
<svg style='left:3698px;top:1042.5px' width='28' height='16'><path d='M3 2.5 H25 L14 13.5 Z' fill='#757575'/></svg>
<div class='a' style='left:2195px;top:446px;width:1407px;height:810px;border:13px solid #ff0000;border-radius:7px'></div>
<div class='a' style='left:3301px;top:333px;width:298px;height:71px;border:13px solid #ff0000;border-radius:7px'></div>
</body></html>
